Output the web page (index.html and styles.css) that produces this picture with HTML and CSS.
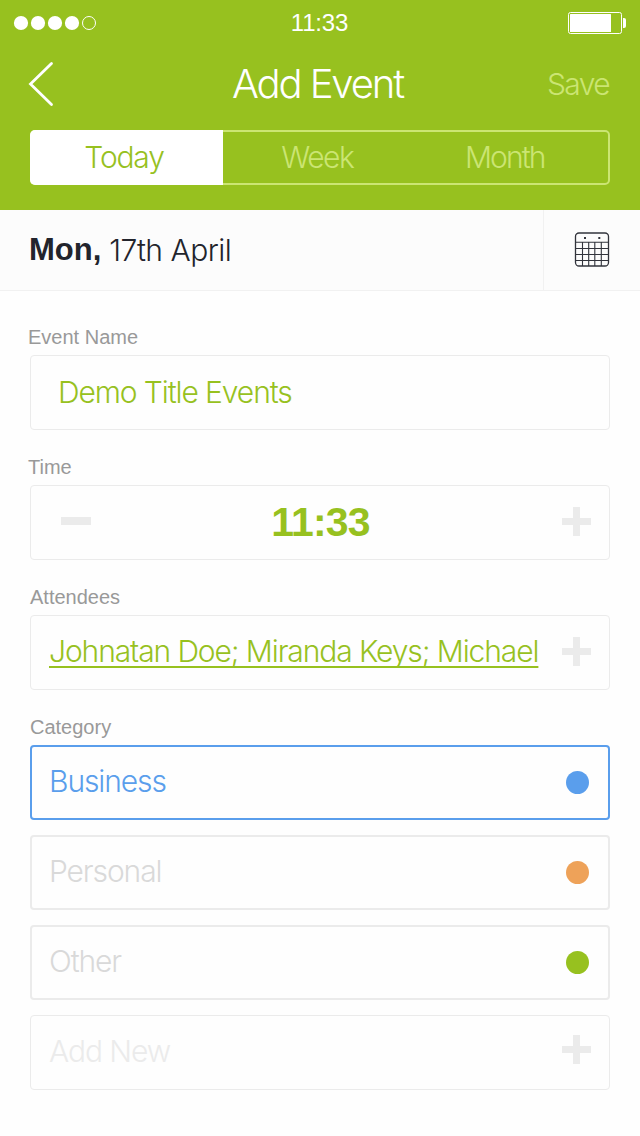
FILE: index.html
```
<!DOCTYPE html>
<html lang="en">
<head>
<meta charset="utf-8">
<title>Add Event</title>
<link rel="stylesheet" href="styles.css">
</head>
<body>
<header class="header">
  <div class="status">
    <svg class="signal" width="84" height="16" viewBox="0 0 84 16"><g fill="#fff"><circle cx="8" cy="8" r="7.1"/><circle cx="25" cy="8" r="7.1"/><circle cx="42" cy="8" r="7.1"/><circle cx="59" cy="8" r="7.1"/></g><circle cx="76" cy="8" r="6.5" fill="none" stroke="#fff"/></svg>
    <span class="clock">11:33</span>
    <svg class="battery" width="58" height="22" viewBox="0 0 58 22"><rect x=".5" y=".5" width="53" height="21" rx="2" fill="none" stroke="#fff"/><rect x="2" y="2" width="41" height="18" rx=".6" fill="#fff"/><path d="M55 6h1q2 0 2 2v6q0 2-2 2h-1z" fill="#fff"/></svg>
  </div>
  <nav class="nav">
    <svg class="back" width="26" height="46" viewBox="0 0 26 46"><path d="M23.5 2.500 2.500 23l21 20.500" fill="none" stroke="#fff" stroke-width="2.800" stroke-linecap="round"/></svg>
    <h1 class="title">Add Event</h1>
    <span class="save">Save</span>
  </nav>
  <div class="tabs">
    <span class="tab active"><span class="today">Today</span></span>
    <span class="tab"><span class="week">Week</span></span>
    <span class="tab"><span class="month">Month</span></span>
  </div>
</header>
<section class="datebar">
  <div class="date"><b class="day">Mon,</b><span class="dm">17th April</span></div>
  <div class="calendar">
    <svg width="36" height="36" viewBox="0 0 36 36" fill="none" stroke="#32343c"><rect x="1.500" y="1" width="33" height="33" rx="3.500" stroke-width="1.300"/><path d="M1.500 10.300h33M1.500 16.500h33M1.500 22.500h33M1.500 28.500h33M8.500 10v24M14.700 10v24M20.800 10v24M27.300 10v24" stroke-width="1.100"/><path d="M10 6h2M24.300 6h2" stroke-width="2"/></svg>
  </div>
</section>
<main class="form">
  <label class="label name-l"><span>Event Name</span></label>
  <div class="field"><span class="event">Demo Title Events</span></div>
  <label class="label time-l"><span>Time</span></label>
  <div class="field time"><i class="minus"></i><b class="hour">11:33</b><i class="plus"></i></div>
  <label class="label att-l"><span>Attendees</span></label>
  <div class="field"><span class="people">Johnatan Doe; Miranda Keys; Michael</span><i class="plus"></i></div>
  <label class="label cat-l"><span>Category</span></label>
  <div class="list">
    <div class="field cat business"><span>Business</span><i class="dot"></i></div>
    <div class="field cat personal"><span>Personal</span><i class="dot"></i></div>
    <div class="field cat other"><span>Other</span><i class="dot"></i></div>
    <div class="field new"><span>Add New</span><i class="plus"></i></div>
  </div>
</main>
</body>
</html>
```
FILE: styles.css
```
* { box-sizing: border-box; }
body { margin: 0; width: 640px; height: 1136px; background: #fefefe; font-family: Inter, "Liberation Sans", sans-serif; font-weight: 300; font-size: 30px; white-space: nowrap; }
svg, i { display: block; flex: none; }
.header { height: 210px; background: #97c11f; color: #fff; }
.status { height: 46px; display: grid; grid-template-columns: 100px 1fr 100px; align-items: center; padding: 0 14px 0 13px; }
.clock { text-align: center; font-family: "Liberation Sans", sans-serif; font-size: 24px; font-weight: 400; letter-spacing: -.2px; }
.battery { justify-self: end; }
.nav { height: 84px; display: grid; grid-template-columns: 120px 1fr 120px; align-items: center; padding: 0 31px 8px 28px; }
.title { margin: 0; padding: 0 2px 2px 0; font-size: 40px; font-weight: 275; text-align: center; letter-spacing: -2.100px; }
.save { justify-self: end; color: #cbe573; letter-spacing: -1.600px; }
.tabs { height: 55px; margin: 0 30px; display: flex; border: 2px solid #cbe573; border-radius: 5px; color: #cbe573; }
.tab { flex: 1; display: flex; align-items: center; justify-content: center; letter-spacing: -1.200px; padding-bottom: 2px; }
.today { padding-right: 5px; }
.week { letter-spacing: -1.500px; padding-right: 4px; }
.month { letter-spacing: -1.900px; padding-right: 14px; }
.active { flex: 0 0 193px; margin: -2px 0 -2px -2px; background: #fff; color: #97c11f; border-radius: 5px 0 0 5px; }
.datebar { height: 81px; display: flex; background: #fcfcfc; border-bottom: 1px solid #f1f1f1; color: #22242c; }
.date { flex: 1; display: flex; align-items: center; gap: 8px; padding-left: 29px; }
.day { font-family: "Liberation Sans", sans-serif; font-size: 31px; font-weight: 700; }
.dm { letter-spacing: -.5px; }
.calendar { width: 97px; border-left: 1px solid #f1f1f1; display: flex; align-items: center; padding: 0 0 0 30px; }
.form { padding: 9px 30px 0; }
.label { display: flex; height: 20px; margin: 27px 0 8px; align-items: center; font-family: "Liberation Sans", sans-serif; font-size: 20px; font-weight: 400; color: #999; }
.name-l, .time-l { margin-left: -2px; }
.field { height: 75px; display: flex; align-items: center; justify-content: space-between; border: 1px solid #ebebeb; border-radius: 4px; padding: 0 18px; color: #97c11f; letter-spacing: -1.100px; }
.event { padding-left: 9px; padding-bottom: 1px; }
.time { padding-left: 30px; }
.minus { width: 30px; height: 8px; background: #ebebeb; margin-bottom: 4px; }
.hour { font-family: "Liberation Sans", sans-serif; font-size: 41px; font-weight: 700; letter-spacing: -.8px; padding-right: 12px; }
.plus { width: 29px; height: 29px; margin-bottom: 2px; background: linear-gradient(#ebebeb, #ebebeb) center / 7px 29px no-repeat, linear-gradient(#ebebeb, #ebebeb) center / 29px 7px no-repeat; }
.people { text-decoration: underline; text-decoration-thickness: 1.500px; text-underline-offset: 4px; text-decoration-skip-ink: none; padding-bottom: 3px; }
.list { display: grid; gap: 15px; }
.cat { border-width: 2px; padding: 0 19px 0 17px; }
.cat span, .new span { padding-bottom: 3px; }
.dot { width: 23px; height: 23px; border-radius: 50%; background: currentColor; }
.business { border-color: #5a9eec; color: #5a9eec; }
.cat.personal, .cat.other { color: #d9d9d9; }
.personal .dot { background: #eea259; }
.other .dot { background: #97c11f; }
.new { color: #ebebeb; }
.new .plus { margin-bottom: 6px; }
```
